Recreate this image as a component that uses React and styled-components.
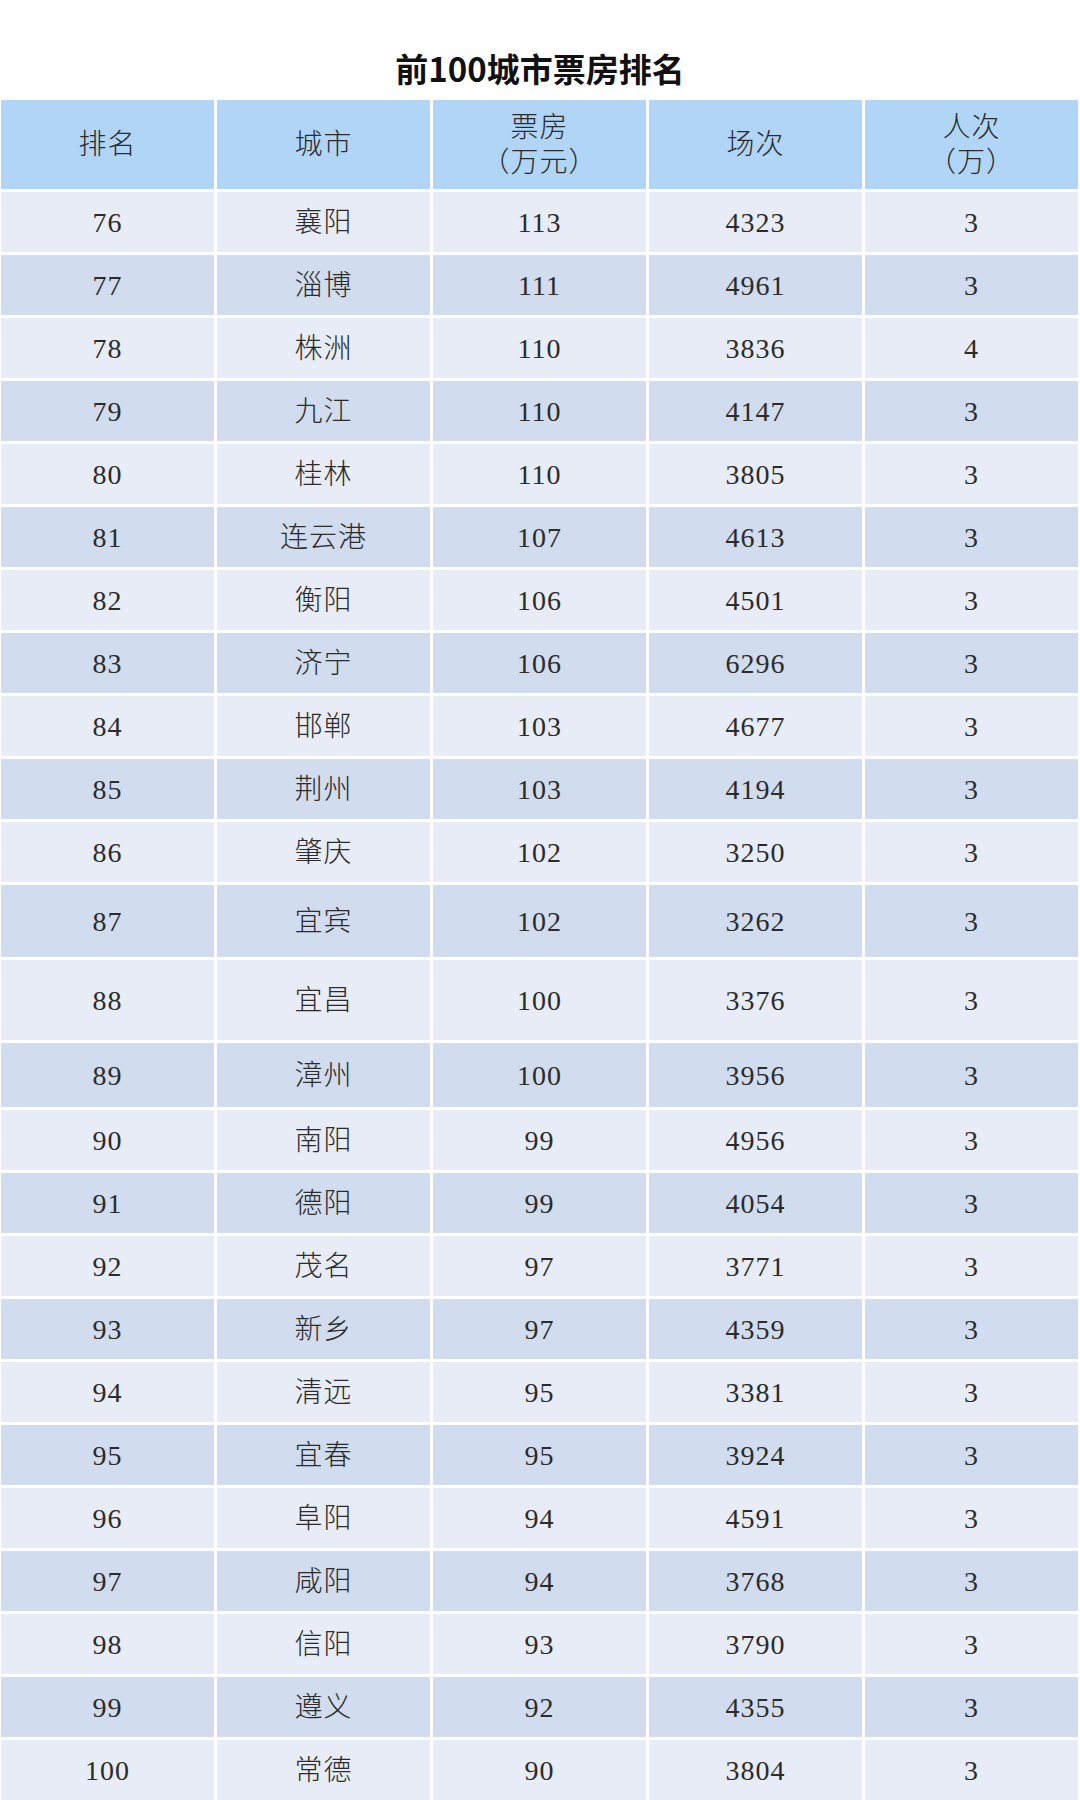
import React from 'react';
import styled, { createGlobalStyle } from 'styled-components';

const GlobalStyle = createGlobalStyle`
  body {
    margin: 0;
    background: #ffffff;
  }
`;

const Page = styled.div`
  width: 1080px;
  background: #ffffff;
`;

const Title = styled.h1`
  margin: 0;
  padding-top: 48px;
  padding-bottom: 12px;
  height: 40px;
  line-height: 40px;
  text-align: center;
  font-family: 'Noto Sans CJK SC', 'Noto Sans', sans-serif;
  font-weight: 700;
  font-size: 33px;
  color: #111111;
`;

const Table = styled.div`
  display: flex;
  flex-direction: column;
  gap: 3px;
  width: 1077px;
  margin-left: 1px;
`;

const Row = styled.div`
  display: grid;
  grid-template-columns: repeat(5, 1fr);
  gap: 3px;
  height: ${({ h }) => h}px;
`;

const Cell = styled.div`
  display: flex;
  flex-direction: column;
  align-items: center;
  justify-content: center;
  background: ${({ tone }) =>
    tone === 'head' ? '#b1d5f7' : tone === 'dark' ? '#d1dcee' : '#e8ecf6'};
  font-family: 'Liberation Serif', 'Noto Sans CJK SC', serif;
  font-weight: 300;
  font-size: 28px;
  line-height: 35px;
  letter-spacing: 1px;
  color: #2b2b2b;
`;

const headers = [
  ['排名'],
  ['城市'],
  ['票房', '（万元）'],
  ['场次'],
  ['人次', '（万）'],
];

const rows = [
  [76, '襄阳', 113, 4323, 3],
  [77, '淄博', 111, 4961, 3],
  [78, '株洲', 110, 3836, 4],
  [79, '九江', 110, 4147, 3],
  [80, '桂林', 110, 3805, 3],
  [81, '连云港', 107, 4613, 3],
  [82, '衡阳', 106, 4501, 3],
  [83, '济宁', 106, 6296, 3],
  [84, '邯郸', 103, 4677, 3],
  [85, '荆州', 103, 4194, 3],
  [86, '肇庆', 102, 3250, 3],
  [87, '宜宾', 102, 3262, 3],
  [88, '宜昌', 100, 3376, 3],
  [89, '漳州', 100, 3956, 3],
  [90, '南阳', 99, 4956, 3],
  [91, '德阳', 99, 4054, 3],
  [92, '茂名', 97, 3771, 3],
  [93, '新乡', 97, 4359, 3],
  [94, '清远', 95, 3381, 3],
  [95, '宜春', 95, 3924, 3],
  [96, '阜阳', 94, 4591, 3],
  [97, '咸阳', 94, 3768, 3],
  [98, '信阳', 93, 3790, 3],
  [99, '遵义', 92, 4355, 3],
  [100, '常德', 90, 3804, 3],
];

// a few rows in the source image are taller than the rest
const rowHeights = { 87: 72, 88: 80, 89: 64 };

const App = () => (
  <Page>
    <GlobalStyle />
    <Title>前100城市票房排名</Title>
    <Table>
      <Row h={89}>
        {headers.map((lines) => (
          <Cell tone="head" key={lines[0]}>
            {lines.map((line) => (
              <span key={line}>{line}</span>
            ))}
          </Cell>
        ))}
      </Row>
      {rows.map((r, i) => (
        <Row key={r[0]} h={rowHeights[r[0]] || 60}>
          {r.map((v, j) => (
            <Cell key={j} tone={i % 2 ? 'dark' : 'light'}>
              {v}
            </Cell>
          ))}
        </Row>
      ))}
    </Table>
  </Page>
);

export default App;
